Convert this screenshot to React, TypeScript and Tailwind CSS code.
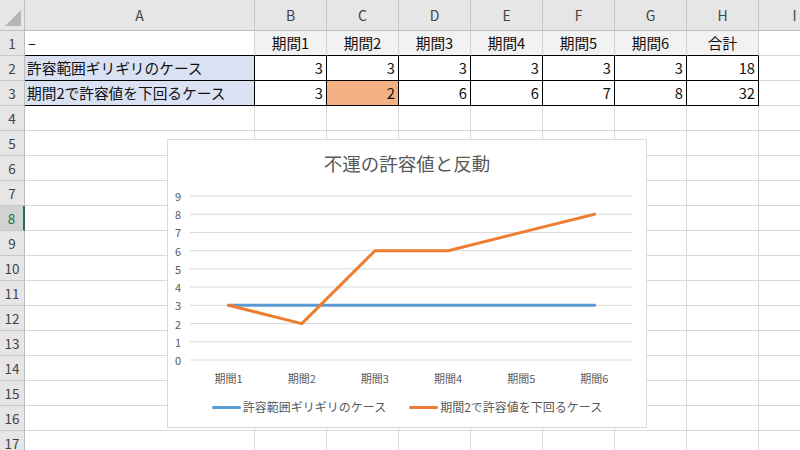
import React from "react";

const FONT = { fontFamily: '"Noto Sans CJK JP", "Noto Sans", sans-serif' };

const cols = ["A", "B", "C", "D", "E", "F", "G", "H", "I"];

const blue = [3, 3, 3, 3, 3, 3];
const orange = [3, 2, 6, 6, 7, 8];

function px(i: number) {
  return 38.6 + 73.2 * i;
}
function py(v: number) {
  return 8 + ((9 - v) * 164) / 9;
}
function pts(arr: number[]) {
  return arr.map((v, i) => `${px(i).toFixed(1)},${py(v).toFixed(1)}`).join(" ");
}

function RowHead({ n, sel }: { n: number; sel?: boolean }) {
  return (
    <div
      className={
        sel
          ? "flex items-center justify-center border-b border-b-[#c8c8c8] border-r-2 border-r-[#217346] bg-[#d2d2d2] text-[13.5px] text-[#217346]"
          : "flex items-center justify-center border-b border-r border-b-[#c8c8c8] border-r-[#bdbdbd] bg-[#e6e6e6] text-[13.5px] text-[#444444]"
      }
    >
      {n}
    </div>
  );
}

function Empty() {
  return <div className="border-b border-r border-[#d9d9d9] bg-white" />;
}

export default function App() {
  const rows: React.ReactNode[] = [];

  // header row
  rows.push(
    <div key="corner" className="relative border-b border-r border-[#bdbdbd] bg-[#e6e6e6]">
      <svg className="absolute left-0 top-0" width="25" height="31">
        <polygon points="5,26 21,26 21,10" fill="#b5b5b5" />
      </svg>
    </div>
  );
  cols.forEach((c) =>
    rows.push(
      <div
        key={"h" + c}
        className="flex items-center justify-center border-b border-r border-b-[#bdbdbd] border-r-[#c8c8c8] bg-[#e6e6e6] text-[14px] text-[#444444]"
      >
        {c}
      </div>
    )
  );

  // row 1
  rows.push(<RowHead key="r1" n={1} />);
  rows.push(
    <div key="a1" className="flex items-center border-b border-r border-b-black border-r-[#d4d4d4] bg-white pl-[3px] text-[14.7px] text-[#111]">
      –
    </div>
  );
  ["期間1", "期間2", "期間3", "期間4", "期間5", "期間6", "合計"].forEach((t) =>
    rows.push(
      <div
        key={"1" + t}
        className="flex items-center justify-center border-b border-r border-b-black border-r-[#d0d0d0] bg-[#f2f2f2] text-[14.7px] text-[#111]"
      >
        {t}
      </div>
    )
  );
  rows.push(<Empty key="i1" />);

  // rows 2,3
  const data: [string, number[]][] = [
    ["許容範囲ギリギリのケース", [3, 3, 3, 3, 3, 3, 18]],
    ["期間2で許容値を下回るケース", [3, 2, 6, 6, 7, 8, 32]],
  ];
  data.forEach(([label, vals], ri) => {
    rows.push(<RowHead key={"r" + (ri + 2)} n={ri + 2} />);
    rows.push(
      <div
        key={"a" + ri}
        className="flex items-center whitespace-nowrap border-b border-r border-black bg-[#d9e1f2] pl-[2px] text-[14.7px] text-[#111]"
      >
        {label}
      </div>
    );
    vals.forEach((v, ci) =>
      rows.push(
        <div
          key={"v" + ri + ci}
          className={
            ri === 1 && ci === 1
              ? "flex items-center justify-end border-b border-r border-black bg-[#f4b084] pr-[3px] text-[14.7px] text-[#111]"
              : "flex items-center justify-end border-b border-r border-black bg-white pr-[3px] text-[14.7px] text-[#111]"
          }
        >
          {v}
        </div>
      )
    );
    rows.push(<Empty key={"i" + ri} />);
  });

  for (let r = 4; r <= 17; r++) {
    rows.push(<RowHead key={"r" + r} n={r} sel={r === 8} />);
    cols.forEach((c) => rows.push(<Empty key={c + r} />));
  }

  return (
    <div className="relative h-[450px] w-[800px] overflow-hidden bg-white" style={FONT}>
      <div className="grid grid-cols-[25px_230px_72px_72px_72px_72px_72px_72px_72px_72px] grid-rows-[31px_repeat(17,25px)]">
        {rows}
      </div>

      {/* Chart */}
      <div className="absolute left-[167px] top-[139px] flex h-[289px] w-[480px] flex-col border border-[#d9d9d9] bg-white">
        <div className="mt-[11px] text-center text-[18.5px] leading-[24px] text-[#595959]">不運の許容値と反動</div>

        <div className="mt-[13px] flex h-[180px]">
          <div className="mt-[2px] flex h-[176px] w-[13px] flex-col justify-between text-right text-[11px] leading-[12px] text-[#595959]">
            {[9, 8, 7, 6, 5, 4, 3, 2, 1, 0].map((n) => (
              <div key={n}>{n}</div>
            ))}
          </div>
          <svg className="ml-[9px]" width="442" height="180">
            {[0, 1, 2, 3, 4, 5, 6, 7, 8, 9].map((v) => (
              <line key={v} x1="0" x2="442" y1={py(v)} y2={py(v)} stroke="#d9d9d9" strokeWidth="1" />
            ))}
            <polyline points={pts(blue)} fill="none" stroke="#5b9bd5" strokeWidth="3" strokeLinecap="round" strokeLinejoin="round" />
            <polyline points={pts(orange)} fill="none" stroke="#ed7d31" strokeWidth="3" strokeLinecap="round" strokeLinejoin="round" />
          </svg>
        </div>

        <div className="ml-[24px] mt-[3px] grid w-[439px] grid-cols-6 text-center text-[11px] leading-[14px] text-[#595959]">
          {["期間1", "期間2", "期間3", "期間4", "期間5", "期間6"].map((t) => (
            <div key={t}>{t}</div>
          ))}
        </div>

        <div className="mt-[14px] flex items-center justify-center gap-[23px] text-[12px] leading-[16px] text-[#595959]">
          <div className="flex items-center gap-[2px]">
            <div className="h-[3px] w-[29px] rounded-full bg-[#5b9bd5]" />
            <span>許容範囲ギリギリのケース</span>
          </div>
          <div className="flex items-center gap-[2px]">
            <div className="h-[3px] w-[29px] rounded-full bg-[#ed7d31]" />
            <span>期間2で許容値を下回るケース</span>
          </div>
        </div>
      </div>
    </div>
  );
}
